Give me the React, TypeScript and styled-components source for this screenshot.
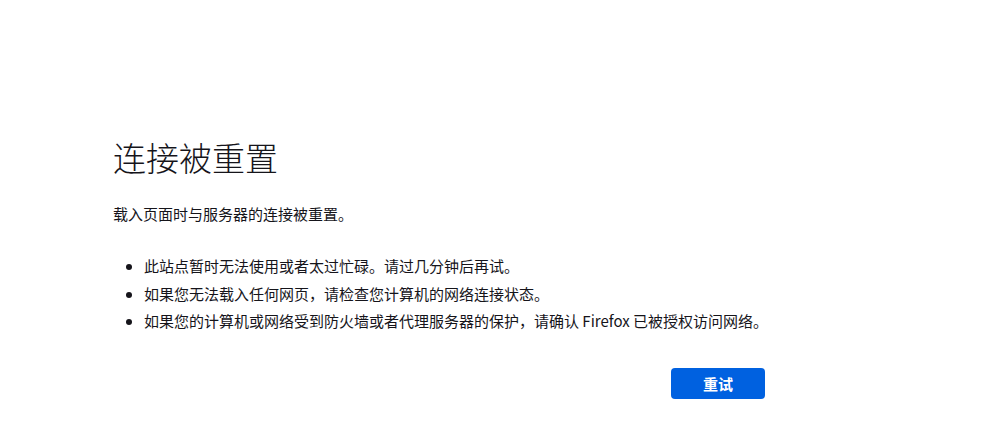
import React from 'react';
import styled, { createGlobalStyle } from 'styled-components';

const GlobalStyle = createGlobalStyle`
  html, body {
    margin: 0;
    padding: 0;
    background: #fff;
  }
  body {
    font-family: "Noto Sans CJK SC", "Noto Sans", sans-serif;
    font-size: 15px;
    color: #15141a;
  }
`;

const Page = styled.main`
  box-sizing: border-box;
  height: 447px;
  padding: 133px 0 0 113px;
`;

const Container = styled.div`
  width: 652px;
`;

const Title = styled.h1`
  margin: 0 0 20px;
  font-size: 33px;
  font-weight: 300;
  line-height: 1.5;
`;

const Lead = styled.p`
  margin: 0 0 30px;
  line-height: 1.5;
`;

const List = styled.ul`
  margin: 0;
  padding-left: 31px;
  white-space: nowrap;
`;

const Item = styled.li`
  line-height: 1.5;
  margin-bottom: 5px;
  & + & {
    margin-top: 2px;
  }
`;

const Actions = styled.div`
  display: flex;
  justify-content: flex-end;
  margin-top: 35px;
`;

const RetryButton = styled.button`
  width: 94px;
  height: 31px;
  border: none;
  border-radius: 4px;
  background: #0061e0;
  color: #fff;
  font-family: inherit;
  font-size: 15px;
  font-weight: 700;
  cursor: pointer;
  &:hover {
    background: #0250bb;
  }
`;

const reasons = [
  '此站点暂时无法使用或者太过忙碌。请过几分钟后再试。',
  '如果您无法载入任何网页，请检查您计算机的网络连接状态。',
  '如果您的计算机或网络受到防火墙或者代理服务器的保护，请确认 Firefox 已被授权访问网络。',
];

const App = () => {
  return (
    <>
      <GlobalStyle />
      <Page>
        <Container>
          <Title>连接被重置</Title>
          <Lead>载入页面时与服务器的连接被重置。</Lead>
          <List>
            {reasons.map((r) => (
              <Item key={r}>{r}</Item>
            ))}
          </List>
          <Actions>
            <RetryButton>重试</RetryButton>
          </Actions>
        </Container>
      </Page>
    </>
  );
};

export default App;
